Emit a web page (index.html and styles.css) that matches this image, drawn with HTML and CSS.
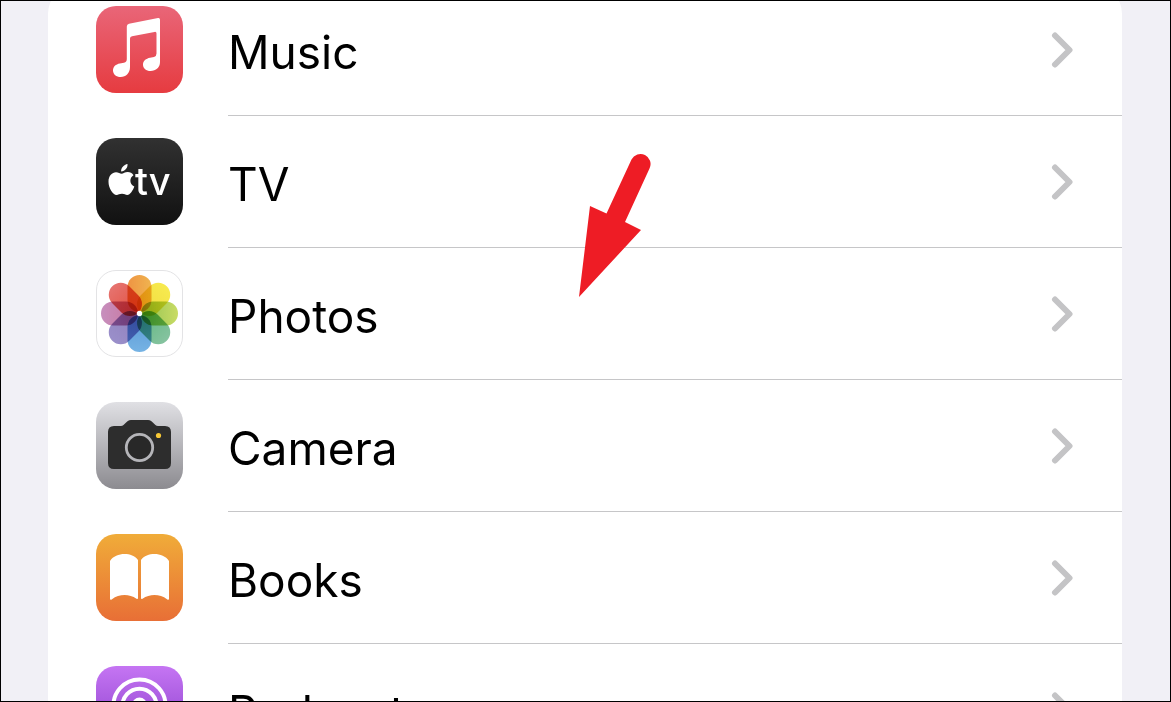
FILE: index.html
```html
<!DOCTYPE html>
<html lang="en">
<head>
<meta charset="utf-8">
<meta name="viewport" content="width=device-width, initial-scale=1">
<title>Settings</title>
<link rel="stylesheet" href="styles.css">
</head>
<body>
<main class="screen">
  <nav class="list" aria-label="Apps">
    <a class="row" href="#music">
      <svg class="icon" viewBox="0 0 87 87" aria-hidden="true">
        <defs><linearGradient id="g-music" x2="0" y2="1"><stop offset="0" stop-color="#e96678"/><stop offset="1" stop-color="#e63b40"/></linearGradient></defs>
        <rect width="87" height="87" rx="20" fill="url(#g-music)"/>
        <path fill="#fff" d="M33 17.8L62 12Q64 11.600 64 13.800V56C64 61.500 60 65 54.500 65C50.200 65 47 62.300 47 58.700C47 54.800 50 52.500 54 51.700L58 50.900Q60.500 50.300 60.500 47.500V27.500Q60.500 25.500 58.500 25.900L36 30.300Q34 30.700 34 32.500V61C34 67 30 71 24.700 71C20.200 71 17 68.300 17 64.500C17 60.700 19.800 58.300 23.800 57.500L28 56.700Q30.800 56.100 30.800 53V20.500Q30.800 18.200 33 17.800Z"/>
      </svg>
      <span class="body"><span class="label">Music</span><svg class="chevron" viewBox="0 0 22 36" aria-hidden="true"><path d="M4 3.500L18.500 18L4 32.500"/></svg></span>
    </a>
    <a class="row" href="#tv">
      <svg class="icon" viewBox="0 0 87 87" aria-hidden="true">
        <defs><linearGradient id="g-tv" x2="0" y2="1"><stop offset="0" stop-color="#313131"/><stop offset="1" stop-color="#111"/></linearGradient></defs>
        <rect width="87" height="87" rx="20" fill="url(#g-tv)"/>
        <path fill="#fff" d="M31.500 26C32 29.500 29 33.500 25.200 33.500C24.700 30 28 26.500 31.500 26ZM25.500 35.700C27.500 35.700 28.800 34 31.700 34C34 34 36.300 35.200 37.500 37.200C33 39.800 33.500 46.500 38.300 48.500C37 52.300 34 57 31.300 57C29.300 57 28.600 55.800 26 55.800C23.300 55.800 22.500 57 20.500 57C17 57 12.500 50 12.500 43.700C12.500 37.700 16.200 34.200 20 34.200C22.400 34.200 24 35.700 25.500 35.700Z"/>
        <text class="tv-mark" x="39" y="57">tv</text>
      </svg>
      <span class="body"><span class="label">TV</span><svg class="chevron" viewBox="0 0 22 36" aria-hidden="true"><path d="M4 3.500L18.500 18L4 32.500"/></svg></span>
    </a>
    <a class="row" href="#photos">
      <svg class="icon" viewBox="0 0 87 87" aria-hidden="true">
        <defs>
          <linearGradient id="p-n" x2="1" y2="0"><stop offset="0" stop-color="#ee9443"/><stop offset="1" stop-color="#f0b450"/></linearGradient>
          <linearGradient id="p-ne" x2="0" y2="1"><stop offset="0" stop-color="#f7ea4f"/><stop offset="1" stop-color="#f0dc40"/></linearGradient>
          <linearGradient id="p-e" x2="0" y2="1"><stop offset="0" stop-color="#c9dc65"/><stop offset="1" stop-color="#90c050"/></linearGradient>
          <linearGradient id="p-se" x2="0" y2="1"><stop offset="0" stop-color="#86c3a0"/><stop offset="1" stop-color="#60b680"/></linearGradient>
          <linearGradient id="p-s" x2="0" y2="1"><stop offset="0" stop-color="#76b3e4"/><stop offset="1" stop-color="#5a98d6"/></linearGradient>
          <linearGradient id="p-sw" x2="0" y2="1"><stop offset="0" stop-color="#9a8fca"/><stop offset="1" stop-color="#9080bc"/></linearGradient>
          <linearGradient id="p-w" x2="0" y2="1"><stop offset="0" stop-color="#c78fbe"/><stop offset="1" stop-color="#c8749a"/></linearGradient>
          <linearGradient id="p-nw" x2="0" y2="1"><stop offset="0" stop-color="#e6736f"/><stop offset="1" stop-color="#e25040"/></linearGradient>
        </defs>
        <rect x=".5" y=".5" width="86" height="86" rx="19.500" fill="#fff" stroke="#e3e3e5"/>
        <g class="petals">
          <rect x="31.500" y="5" width="24" height="37" rx="12" fill="url(#p-n)"/>
          <rect x="31.500" y="5" width="24" height="37" rx="12" fill="url(#p-ne)" transform="rotate(45 43.500 43.500)"/>
          <rect x="31.500" y="5" width="24" height="37" rx="12" fill="url(#p-e)" transform="rotate(90 43.500 43.500)"/>
          <rect x="31.500" y="5" width="24" height="37" rx="12" fill="url(#p-se)" transform="rotate(135 43.500 43.500)"/>
          <rect x="31.500" y="5" width="24" height="37" rx="12" fill="url(#p-s)" transform="rotate(180 43.500 43.500)"/>
          <rect x="31.500" y="5" width="24" height="37" rx="12" fill="url(#p-sw)" transform="rotate(225 43.500 43.500)"/>
          <rect x="31.500" y="5" width="24" height="37" rx="12" fill="url(#p-w)" transform="rotate(270 43.500 43.500)"/>
          <rect x="31.500" y="5" width="24" height="37" rx="12" fill="url(#p-nw)" transform="rotate(315 43.500 43.500)"/>
        </g>
        <circle cx="43.500" cy="43.500" r="2.700" fill="#fff"/>
      </svg>
      <span class="body"><span class="label">Photos</span><svg class="chevron" viewBox="0 0 22 36" aria-hidden="true"><path d="M4 3.500L18.500 18L4 32.500"/></svg></span>
      <svg class="pointer" viewBox="0 0 74 146" aria-hidden="true"><path d="M1 145L12 54L28.500 61.500L53.500 7.500A10 10 0 0 1 71.500 16.500L47 70L63 78Z"/></svg>
    </a>
    <a class="row" href="#camera">
      <svg class="icon" viewBox="0 0 87 87" aria-hidden="true">
        <defs><linearGradient id="g-camera" x2="0" y2="1"><stop offset="0" stop-color="#e0e0e4"/><stop offset="1" stop-color="#8c8b90"/></linearGradient></defs>
        <rect width="87" height="87" rx="20" fill="url(#g-camera)"/>
        <path fill="#2d2d2d" d="M18 24H25C29 24 30 18 35 18H52C57 18 58 24 62 24H69Q75 24 75 30V61Q75 67 69 67H18Q12 67 12 61V30Q12 24 18 24Z"/>
        <circle cx="43.500" cy="45.500" r="13.200" fill="#282828" stroke="#b5b5b9" stroke-width="2.800"/>
        <circle cx="62.500" cy="33.500" r="2.600" fill="#f8c936"/>
      </svg>
      <span class="body"><span class="label">Camera</span><svg class="chevron" viewBox="0 0 22 36" aria-hidden="true"><path d="M4 3.500L18.500 18L4 32.500"/></svg></span>
    </a>
    <a class="row" href="#books">
      <svg class="icon" viewBox="0 0 87 87" aria-hidden="true">
        <defs><linearGradient id="g-books" x2="0" y2="1"><stop offset="0" stop-color="#f0ac39"/><stop offset="1" stop-color="#e86f36"/></linearGradient></defs>
        <rect width="87" height="87" rx="20" fill="url(#g-books)"/>
        <path fill="#fff" d="M14 27C20 18 36 18 42 26V64Q42 65.500 40.500 64.800C33 59.500 23 60 16 65.200Q14 66.500 14 64.500ZM73 27C67 18 51 18 45 26V64Q45 65.500 46.500 64.800C54 59.500 64 60 71 65.200Q73 66.500 73 64.500Z"/>
      </svg>
      <span class="body"><span class="label">Books</span><svg class="chevron" viewBox="0 0 22 36" aria-hidden="true"><path d="M4 3.500L18.500 18L4 32.500"/></svg></span>
    </a>
    <a class="row" href="#podcasts">
      <svg class="icon" viewBox="0 0 87 87" aria-hidden="true">
        <defs><linearGradient id="g-podcasts" x2="0" y2="1"><stop offset="0" stop-color="#c575f3"/><stop offset="1" stop-color="#8137c4"/></linearGradient></defs>
        <rect width="87" height="87" rx="20" fill="url(#g-podcasts)"/>
        <g fill="none" stroke="#fff" stroke-width="4" stroke-linecap="round">
          <path d="M29 61A26 26 0 1 1 58 61"/>
          <path d="M33 53A17 17 0 1 1 54 53"/>
        </g>
        <circle cx="43.500" cy="39" r="7.500" fill="#fff"/>
        <rect x="38" y="49" width="11" height="25" rx="5.500" fill="#fff"/>
      </svg>
      <span class="body"><span class="label">Podcasts</span><svg class="chevron" viewBox="0 0 22 36" aria-hidden="true"><path d="M4 3.500L18.500 18L4 32.500"/></svg></span>
    </a>
  </nav>
</main>
</body>
</html>
```
FILE: styles.css
```css
* {
  box-sizing: border-box;
}

body {
  margin: 0;
  background: #f1f0f6;
  font-family: Inter, "Liberation Sans", sans-serif;
  color: #000;
}

.screen {
  height: 100vh;
  overflow: hidden;
  border: 1px solid #000;
  padding: 0 48px 0 47px;
}

/* The list is scrolled slightly past its top edge. */
.list {
  margin-top: -17px;
  background: #fff;
  border-radius: 30px;
}

.row {
  position: relative;
  display: flex;
  align-items: center;
  gap: 45px;
  height: 132px;
  padding-left: 48px;
  color: inherit;
  text-decoration: none;
}

.icon {
  flex: none;
  width: 87px;
  height: 87px;
  margin-bottom: 1px;
}

.body {
  flex: 1;
  display: flex;
  align-items: center;
  justify-content: space-between;
  height: 100%;
  padding-right: 49px;
  border-bottom: 1px solid #c6c6c8;
}

.row:last-child .body {
  border-bottom-color: transparent;
}

.label {
  padding-top: 4px;
  font-size: 46px;
  line-height: 56px;
}

.chevron {
  width: 22px;
  height: 36px;
  fill: none;
  stroke: #c4c4c6;
  stroke-width: 6;
  stroke-linecap: round;
  stroke-linejoin: round;
}

.petals rect {
  mix-blend-mode: multiply;
}

.tv-mark {
  fill: #fff;
  font-size: 38px;
  font-weight: 500;
}

.pointer {
  position: absolute;
  top: -96px;
  left: 530px;
  width: 74px;
  height: 146px;
  fill: #ee1c25;
}
```
